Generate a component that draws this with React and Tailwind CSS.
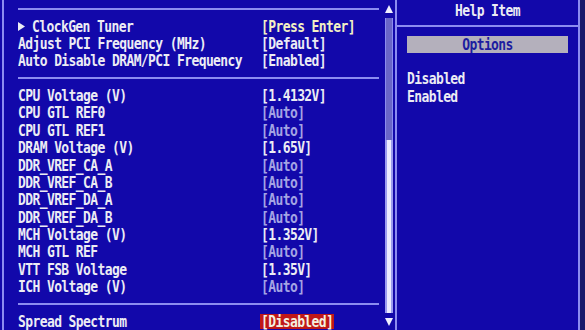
import React from "react";

const ROW = "h-[17.4px] flex items-center whitespace-pre";
const TX = "inline-block scale-y-[1.15]";

function Line() {
  return (
    <div className="h-[17.4px] flex items-center">
      <div className="h-[2px] w-full bg-[#8c8cf0]" />
    </div>
  );
}

function Row({ label, value, vcls = "text-[#ececf4]", arrow = false, hl = false }) {
  return (
    <div className={ROW}>
      <div className="w-[243px] flex items-center">
        {arrow && (
          <span className="w-[14px] flex items-center">
            <svg width="7" height="9" viewBox="0 0 7 9">
              <path d="M0 0 L7 4.5 L0 9 Z" fill="#ececf4" />
            </svg>
          </span>
        )}
        <span className={`${TX} text-[#ececf4]`}>{label}</span>
      </div>
      {hl ? (
        <span className="bg-[#c01818] text-[#f4f0e0] px-[1px] -ml-[1px] h-[15px] flex items-center">
          <span className={TX}>{value}</span>
        </span>
      ) : (
        <span className={`${TX} ${vcls}`}>{value}</span>
      )}
    </div>
  );
}

const AUTO = "text-[#a4a4e4]";

export default function App() {
  return (
    <div
      className="w-[585px] h-[330px] bg-[#1208aa] flex overflow-hidden text-[13px] font-bold tracking-[-0.6px] leading-none"
      style={{ fontFamily: '"DejaVu Sans Mono", "Liberation Mono", monospace' }}
    >
      <div className="w-[2px] shrink-0" />
      <div className="w-[2px] shrink-0 bg-[#8c8cf0]" />
      {/* left panel */}
      <div className="w-[380px] shrink-0 flex flex-col pl-[14px] pr-[5px]">
        <Line />
        <Row arrow label="ClockGen Tuner" value="[Press Enter]" vcls="text-[#f2f0c4]" />
        <Row label="Adjust PCI Frequency (MHz)" value="[Default]" />
        <Row label="Auto Disable DRAM/PCI Frequency" value="[Enabled]" />
        <Line />
        <Row label="CPU Voltage (V)" value="[1.4132V]" />
        <Row label="CPU GTL REF0" value="[Auto]" vcls={AUTO} />
        <Row label="CPU GTL REF1" value="[Auto]" vcls={AUTO} />
        <Row label="DRAM Voltage (V)" value="[1.65V]" />
        <Row label="DDR_VREF_CA_A" value="[Auto]" vcls={AUTO} />
        <Row label="DDR_VREF_CA_B" value="[Auto]" vcls={AUTO} />
        <Row label="DDR_VREF_DA_A" value="[Auto]" vcls={AUTO} />
        <Row label="DDR_VREF_DA_B" value="[Auto]" vcls={AUTO} />
        <Row label="MCH Voltage (V)" value="[1.352V]" />
        <Row label="MCH GTL REF" value="[Auto]" vcls={AUTO} />
        <Row label="VTT FSB Voltage" value="[1.35V]" />
        <Row label="ICH Voltage (V)" value="[Auto]" vcls={AUTO} />
        <Line />
        <Row label="Spread Spectrum" value="[Disabled]" hl />
      </div>
      {/* scrollbar */}
      <div className="w-[9px] shrink-0 flex flex-col items-center">
        <div className="h-[18px] flex items-center justify-center">
          <svg width="8" height="8" viewBox="0 0 8 8">
            <path d="M4 0 L8 8 L0 8 Z" fill="#f0f0ff" />
          </svg>
        </div>
        <div className="w-[8px] h-[122px] bg-[#6a66c8] border-x border-[#8c8cf0]" />
        <div className="w-[8px] h-[173px] bg-[#ececff] border-x-2 border-[#9c9cf0]" />
        <div className="h-[17px] flex items-center justify-center">
          <svg width="8" height="8" viewBox="0 0 8 8">
            <path d="M0 0 L8 0 L4 8 Z" fill="#f0f0ff" />
          </svg>
        </div>
      </div>
      <div className="w-[2px] shrink-0" />
      <div className="w-[2px] shrink-0 bg-[#8c8cf0]" />
      {/* right panel */}
      <div className="w-[181px] shrink-0 flex flex-col">
        <div className="h-[25px] flex items-center justify-center text-[#ececf4] pb-[6px] pt-[2px]">
          <span className={TX}>Help Item</span>
        </div>
        <div className="h-[2px] bg-[#8c8cf0]" />
        <div className="px-[10px] pt-[9px]">
          <div className="h-[17px] bg-[#b4b0bc] flex items-center justify-center text-[#1c1ca0]">
            <span className={TX}>Options</span>
          </div>
        </div>
        <div className="pl-[10px] pt-[17px] text-[#ececf4]">
          <div className={ROW}><span className={TX}>Disabled</span></div>
          <div className={ROW}><span className={TX}>Enabled</span></div>
        </div>
      </div>
      <div className="w-[2px] shrink-0 bg-[#8c8cf0]" />
      <div className="flex-1 bg-[#18186a]" />
    </div>
  );
}
